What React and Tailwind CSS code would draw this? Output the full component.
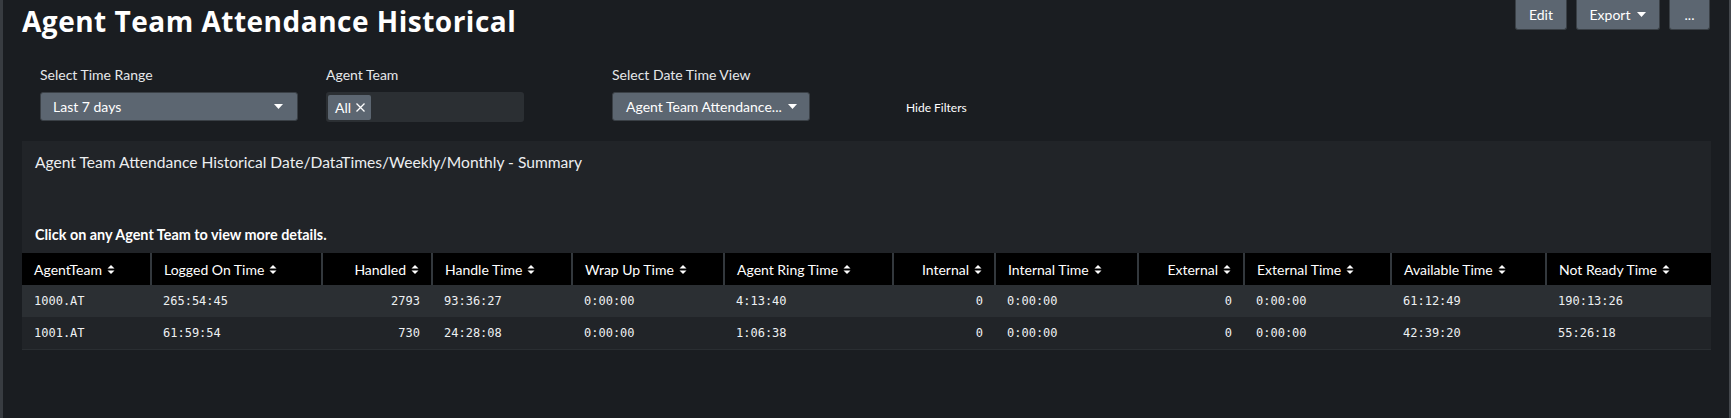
import React from "react";

const Sort = () => (
  <svg width="8" height="11" viewBox="0 0 8 11" className="inline-block ml-[5px] -mt-[2px]" fill="currentColor">
    <path d="M0.5 4.5 L4 1 L7.5 4.5 Z" />
    <path d="M0.5 6.5 L4 10 L7.5 6.5 Z" />
  </svg>
);

const Caret = ({ className = "" }) => (
  <svg width="9" height="5" viewBox="0 0 9 5" className={className} fill="currentColor">
    <path d="M0 0 L9 0 L4.5 5 Z" />
  </svg>
);

const cols = [
  { name: "AgentTeam", w: 129, right: false },
  { name: "Logged On Time", w: 171, right: false },
  { name: "Handled", w: 110, right: true },
  { name: "Handle Time", w: 140, right: false },
  { name: "Wrap Up Time", w: 152, right: false },
  { name: "Agent Ring Time", w: 169, right: false },
  { name: "Internal", w: 102, right: true },
  { name: "Internal Time", w: 143, right: false },
  { name: "External", w: 106, right: true },
  { name: "External Time", w: 147, right: false },
  { name: "Available Time", w: 155, right: false },
  { name: "Not Ready Time", w: 165, right: false },
];

const rows = [
  ["1000.AT", "265:54:45", "2793", "93:36:27", "0:00:00", "4:13:40", "0", "0:00:00", "0", "0:00:00", "61:12:49", "190:13:26"],
  ["1001.AT", "61:59:54", "730", "24:28:08", "0:00:00", "1:06:38", "0", "0:00:00", "0", "0:00:00", "42:39:20", "55:26:18"],
];

export default function App() {
  return (
    <div className="w-[1731px] h-[418px] overflow-hidden bg-[#1a1d21] border-l-[3px] border-l-[#383c41] border-r-[2px] border-r-[#44484d] text-white font-['Lato',sans-serif]">
      {/* Header */}
      <div className="flex justify-between items-start h-[60px]">
        <h1 className="pl-[19px] pt-[3px] text-[28px] leading-[36px] font-bold tracking-[0.5px] text-white font-['Open_Sans',sans-serif]">
          Agent Team Attendance Historical
        </h1>
        <div className="flex gap-[9px] pr-[19px]">
          <button className="w-[52px] h-[30px] bg-[#5c6671] border border-[#3a4046] border-t-0 rounded-b-[3px] text-[14px] text-white">Edit</button>
          <button className="w-[84px] h-[30px] bg-[#5c6671] border border-[#3a4046] border-t-0 rounded-b-[3px] text-[14px] text-white flex items-center justify-center gap-[7px]">
            Export <Caret />
          </button>
          <button className="w-[41px] h-[30px] bg-[#5c6671] border border-[#3a4046] border-t-0 rounded-b-[3px] text-[14px] text-white">...</button>
        </div>
      </div>

      {/* Filters */}
      <div className="flex items-start pl-[37px] h-[81px]">
        <div className="w-[286px]">
          <div className="text-[14px] leading-[20px] text-[#e6e8ea] h-[32px] pt-[5px]">Select Time Range</div>
          <div className="w-[258px] h-[29px] bg-[#5c6671] border border-[#3a4046] rounded-[3px] flex items-center justify-between pl-[12px] pr-[14px] text-[14px]">
            <span>Last 7 days</span>
            <Caret />
          </div>
        </div>
        <div className="w-[286px]">
          <div className="text-[14px] leading-[20px] text-[#e6e8ea] h-[32px] pt-[5px]">Agent Team</div>
          <div className="w-[198px] h-[30px] bg-[#2b2f33] rounded-[3px] flex items-center px-[2px]">
            <div className="h-[25px] bg-[#5c6671] rounded-[2px] flex items-center pl-[7px] pr-[5px] gap-[4px] text-[14px]">
              <span>All</span>
              <svg width="11" height="11" viewBox="0 0 11 11" stroke="currentColor" strokeWidth="1.3">
                <path d="M1.5 1.5 L9.5 9.5 M9.5 1.5 L1.5 9.5" />
              </svg>
            </div>
          </div>
        </div>
        <div className="w-[294px]">
          <div className="text-[14px] leading-[20px] text-[#e6e8ea] h-[32px] pt-[5px]">Select Date Time View</div>
          <div className="w-[198px] h-[29px] bg-[#5c6671] border border-[#3a4046] rounded-[3px] flex items-center pl-[13px] gap-[6px] text-[14px]">
            <span>Agent Team Attendance...</span>
            <Caret />
          </div>
        </div>
        <div className="pt-[38px] text-[12px] leading-[20px] text-white">Hide Filters</div>
      </div>

      {/* Panel */}
      <div className="ml-[19px] w-[1689px] bg-[#212428]">
        <div className="pl-[13px] pt-[9px] text-[15.6px] leading-[24px] text-[#eceef0]">
          Agent Team Attendance Historical Date/DataTimes/Weekly/Monthly - Summary
        </div>
        <div className="pl-[13px] pt-[51px] pb-[8px] text-[14.4px] leading-[20px] font-bold text-white">
          Click on any Agent Team to view more details.
        </div>
        <table className="table-fixed border-collapse w-[1689px]">
          <colgroup>
            {cols.map((c) => (
              <col key={c.name} style={{ width: c.w }} />
            ))}
          </colgroup>
          <thead>
            <tr className="bg-black h-[32px]">
              {cols.map((c, i) => (
                <th
                  key={c.name}
                  className={`font-normal text-[14px] px-[12px] whitespace-nowrap text-white ${c.right ? "text-right" : "text-left"} ${i > 0 ? "border-l-[2px] border-l-[#33383d]" : ""}`}
                >
                  {c.name}
                  <Sort />
                </th>
              ))}
            </tr>
          </thead>
          <tbody>
            {rows.map((r, ri) => (
              <tr key={ri} className={`h-[32px] ${ri === 0 ? "bg-[#2b2f33]" : "bg-[#212428] border-b border-b-[#2a2e32]"}`}>
                {r.map((v, ci) => (
                  <td
                    key={ci}
                    className={`px-[12px] text-[12px] font-['DejaVu_Sans_Mono',monospace] text-[#eef0f2] whitespace-nowrap ${cols[ci].right ? "text-right" : "text-left"}`}
                  >
                    {v}
                  </td>
                ))}
              </tr>
            ))}
          </tbody>
        </table>
      </div>
    </div>
  );
}
